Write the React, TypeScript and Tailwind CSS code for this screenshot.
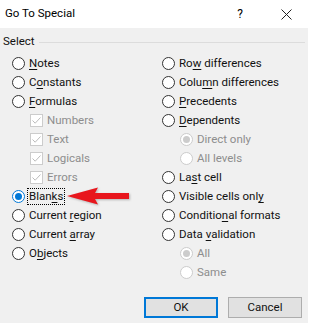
import React from 'react';

type Opt = {
  label: string;
  key?: number; // index of the underlined access key letter
  kind: 'radio' | 'check' | 'subradio';
  checked?: boolean;
  disabled?: boolean;
  focused?: boolean;
};

const leftColumn: Opt[] = [
  { label: 'Notes', key: 0, kind: 'radio' },
  { label: 'Constants', key: 1, kind: 'radio' },
  { label: 'Formulas', key: 0, kind: 'radio' },
  { label: 'Numbers', kind: 'check', checked: true, disabled: true },
  { label: 'Text', kind: 'check', checked: true, disabled: true },
  { label: 'Logicals', kind: 'check', checked: true, disabled: true },
  { label: 'Errors', kind: 'check', checked: true, disabled: true },
  { label: 'Blanks', key: 4, kind: 'radio', checked: true, focused: true },
  { label: 'Current region', key: 8, kind: 'radio' },
  { label: 'Current array', key: 8, kind: 'radio' },
  { label: 'Objects', key: 1, kind: 'radio' },
];

const rightColumn: Opt[] = [
  { label: 'Row differences', key: 2, kind: 'radio' },
  { label: 'Column differences', key: 4, kind: 'radio' },
  { label: 'Precedents', key: 0, kind: 'radio' },
  { label: 'Dependents', key: 0, kind: 'radio' },
  { label: 'Direct only', kind: 'subradio', checked: true, disabled: true },
  { label: 'All levels', kind: 'subradio', disabled: true },
  { label: 'Last cell', key: 2, kind: 'radio' },
  { label: 'Visible cells only', key: 17, kind: 'radio' },
  { label: 'Conditional formats', key: 8, kind: 'radio' },
  { label: 'Data validation', key: 5, kind: 'radio' },
  { label: 'All', kind: 'subradio', checked: true, disabled: true },
  { label: 'Same', kind: 'subradio', disabled: true },
];

function Label({ text, keyIndex }: { text: string; keyIndex?: number }) {
  if (keyIndex === undefined) return <>{text}</>;
  return (
    <>
      {text.slice(0, keyIndex)}
      <span className="underline underline-offset-2">{text[keyIndex]}</span>
      {text.slice(keyIndex + 1)}
    </>
  );
}

function RadioMark({ checked, disabled }: { checked?: boolean; disabled?: boolean }) {
  const ring = disabled ? 'border-[#cccccc]' : checked ? 'border-[#0078d7]' : 'border-[#333333]';
  const dot = disabled ? 'bg-[#cccccc]' : 'bg-[#0078d7]';
  return (
    <span
      className={`w-[13px] h-[13px] rounded-full border bg-white flex items-center justify-center flex-shrink-0 ${ring}`}
    >
      {checked && <span className={`w-[7px] h-[7px] rounded-full ${dot}`} />}
    </span>
  );
}

function CheckMark() {
  return (
    <span className="w-[13px] h-[13px] border border-[#cccccc] bg-white flex items-center justify-center flex-shrink-0">
      <svg width="11" height="11" viewBox="0 0 11 11" fill="none">
        <path d="M1.5 5.5 L4.2 8.2 L9.5 2.5" stroke="#bcbcbc" strokeWidth="1" />
      </svg>
    </span>
  );
}

function Row({ opt }: { opt: Opt }) {
  const indent = opt.kind === 'radio' ? '' : 'pl-[18px]';
  const textColor = opt.disabled ? 'text-[#8d8d8d]' : 'text-[#111]';
  return (
    <div className={`h-[19px] flex items-center gap-[4px] ${indent}`}>
      {opt.kind === 'check' ? (
        <CheckMark />
      ) : (
        <RadioMark checked={opt.checked} disabled={opt.disabled} />
      )}
      <span
        className={`leading-[15px] whitespace-nowrap ${textColor} ${
          opt.focused ? 'outline outline-1 outline-dotted outline-black -ml-[1px] px-[1px]' : ''
        }`}
      >
        <Label text={opt.label} keyIndex={opt.key} />
      </span>
    </div>
  );
}

export default function App() {
  return (
    <div
      className="relative w-[308px] h-[323px] bg-[#f0f0f0] text-[11.5px] overflow-hidden"
      style={{ fontFamily: 'Roboto, "Noto Sans", sans-serif' }}
    >
      {/* Barra de título */}
      <div className="h-[28px] bg-white flex items-center pl-[5px] pr-[16px]">
        <span className="flex-1 text-black text-[11.5px]">Go To Special</span>
        <span className="mr-[38px] text-black text-[12px]">?</span>
        <svg width="11" height="11" viewBox="0 0 11 11">
          <path d="M0.5 0.5 L10.5 10.5 M10.5 0.5 L0.5 10.5" stroke="#222" strokeWidth="1" />
        </svg>
      </div>

      {/* Grupo Select */}
      <div className="flex items-center pl-[3px] pr-[3px] h-[28px]">
        <span className="text-[#111]">Select</span>
        <span className="flex-1 h-px bg-[#dcdcdc] ml-[4px]" />
      </div>

      <div className="grid grid-cols-[150px_1fr] pl-[12px] -mt-[2px]">
        <div className="flex flex-col">
          {leftColumn.map((o) => (
            <Row key={o.label} opt={o} />
          ))}
        </div>
        <div className="flex flex-col">
          {rightColumn.map((o) => (
            <Row key={o.label} opt={o} />
          ))}
        </div>
      </div>

      {/* Botones */}
      <div className="flex justify-end gap-[10px] pr-[6px] mt-[15px]">
        <button className="w-[74px] h-[21px] bg-[#e1e1e1] border-2 border-[#0078d7] text-[#111] leading-none">
          OK
        </button>
        <button className="w-[74px] h-[21px] bg-[#e1e1e1] border border-[#adadad] text-[#111] leading-none">
          Cancel
        </button>
      </div>

      {/* Flecha roja sobre "Blanks" */}
      <svg className="absolute left-0 top-0 pointer-events-none" width="308" height="323">
        <path
          d="M67 196 L98 187.5 L95 193 L129 193 L129 199 L95 199 L98 204.5 Z"
          fill="#e8161d"
          style={{ filter: 'drop-shadow(1px 1px 1px rgba(0,0,0,0.25))' }}
        />
      </svg>
    </div>
  );
}
